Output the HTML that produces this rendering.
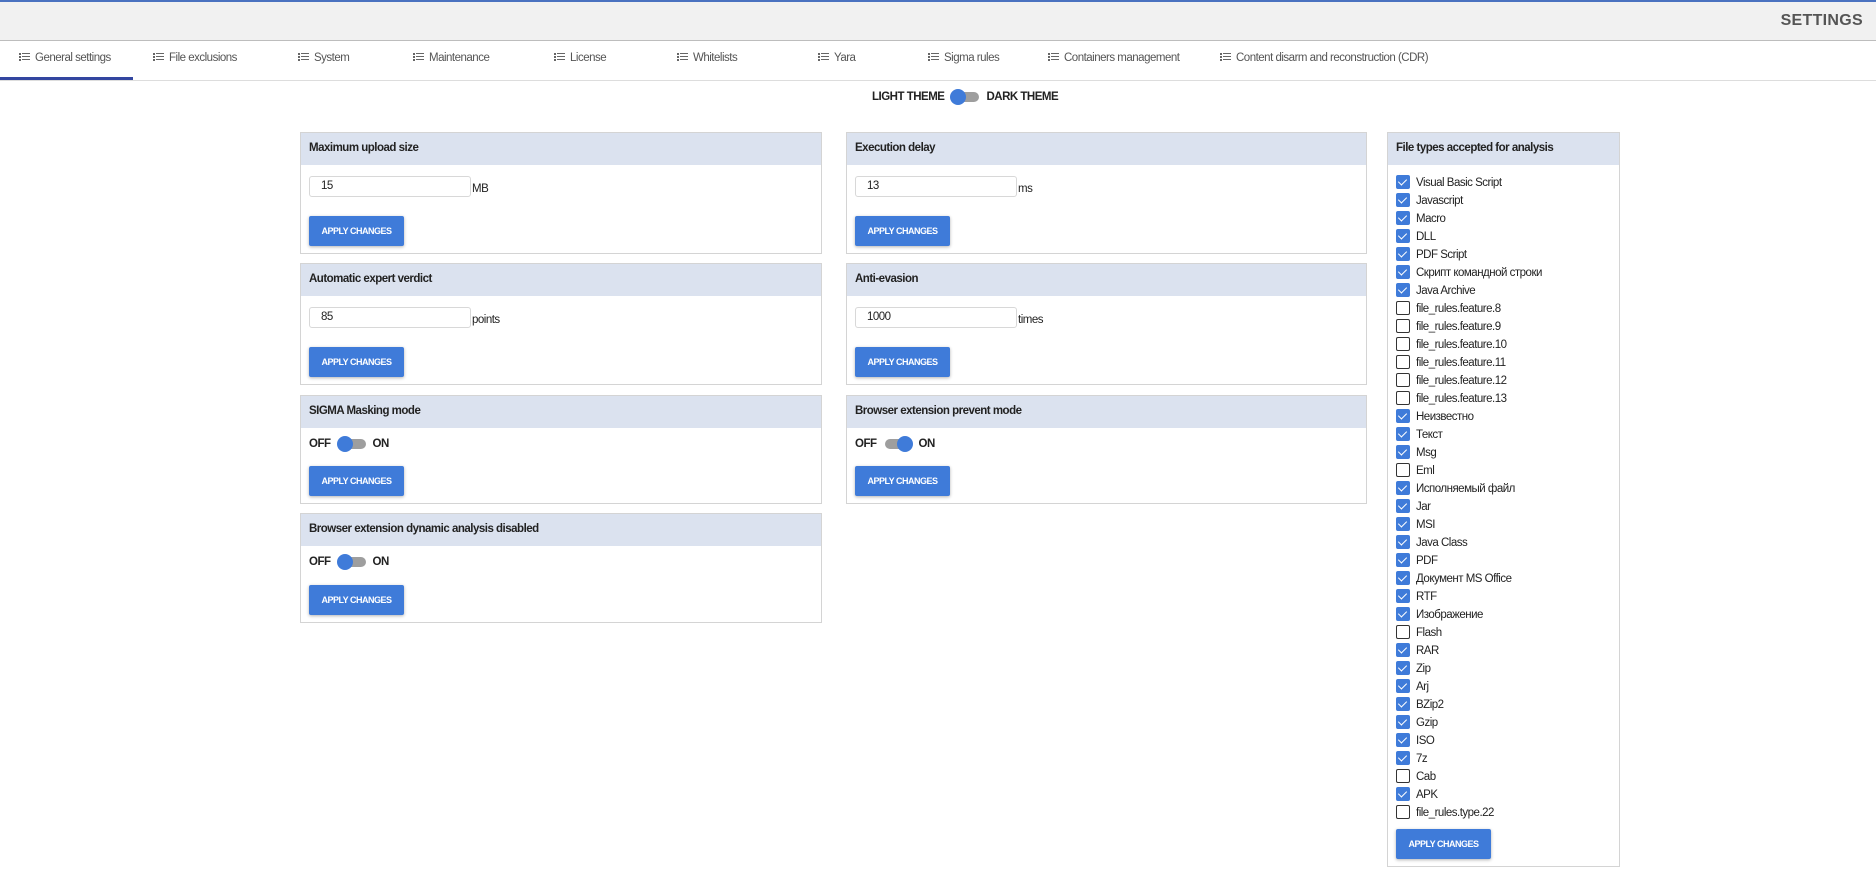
<!DOCTYPE html>
<html><head><meta charset="utf-8"><style>
*{box-sizing:border-box;margin:0;padding:0}
body{width:1876px;height:889px;background:#fff;font-family:"Liberation Sans","Noto Sans CJK SC",sans-serif;color:#222;position:relative;overflow:hidden;font-size:11.5px;letter-spacing:-0.5px}
.hdr{position:absolute;left:0;top:0;width:1876px;height:41px;background:#f1f1f1;border-top:2px solid #4a72c0;border-bottom:1px solid #bdbdbd}
.hdr span{position:absolute;right:13px;top:10px;font-size:16px;font-weight:bold;color:#555;letter-spacing:0.3px}
.tabs{position:absolute;left:0;top:41px;width:1876px;height:40px;border-bottom:1px solid #ddd}
.tab{position:absolute;top:11px;font-size:11.5px;color:#555;white-space:nowrap}
.tab i{display:inline-block;width:11px;height:8px;margin-right:5px;vertical-align:0;background:
linear-gradient(#666,#666) 0 0/2px 2px no-repeat,linear-gradient(#666,#666) 0 3px/2px 2px no-repeat,linear-gradient(#666,#666) 0 6px/2px 2px no-repeat,
linear-gradient(#666,#666) 3px 0/8px 1px no-repeat,linear-gradient(#666,#666) 3px 3px/8px 1px no-repeat,linear-gradient(#666,#666) 3px 6px/8px 1px no-repeat}
.ul{position:absolute;left:0;top:77px;width:133px;height:3px;background:#3346a0}
.card{position:absolute;border:1px solid #d4d4d4;background:#fff}
.ch{height:32px;background:#dbe2ef;font-weight:bold;font-size:11.5px;padding:9px 8px;color:#222}
.inp{position:absolute;left:8px;top:11px;width:162px;height:21px;border:1px solid #d8d8d8;border-radius:3px;padding:3px 11px;font-size:11.5px}
.unit{position:absolute;left:171px;top:18px}
.btn{position:absolute;left:8px;width:95px;height:30px;background:#3f7bd9;border-radius:2px;color:#fff;font-weight:bold;font-size:9px;text-align:center;line-height:30px;box-shadow:0 1px 3px rgba(0,0,0,.3);letter-spacing:-0.5px}
.tg{position:absolute;font-weight:bold;font-size:11.5px;white-space:nowrap}
.sw{display:inline-block;position:relative;width:30px;height:16px;vertical-align:middle;margin:0 6px}
.sw:before{content:"";position:absolute;left:2px;top:3px;width:27px;height:10px;border-radius:5px;background:#9e9e9e}
.sw:after{content:"";position:absolute;top:0;width:16px;height:16px;border-radius:50%;background:#3f7bd9}
.sw.l:after{left:0}.sw.r:after{left:14px}
.cb{position:absolute;left:8px;font-size:11.5px;white-space:nowrap}
.cb b{display:inline-block;width:14px;height:14px;border:1.5px solid #333;border-radius:2px;vertical-align:-3px;margin-right:6px;position:relative}
.cb b.c{background:#3f7bd9;border-color:#3f7bd9}
.cb b.c:after{content:"";position:absolute;left:3px;top:1px;width:4px;height:7px;border:solid #fff;border-width:0 1.3px 1.3px 0;transform:rotate(45deg)}
</style></head><body>
<div class="hdr"><span>SETTINGS</span></div>
<div class="tabs">
<div class="tab" style="left:19px"><i></i>General settings</div>
<div class="tab" style="left:153px"><i></i>File exclusions</div>
<div class="tab" style="left:298px"><i></i>System</div>
<div class="tab" style="left:413px"><i></i>Maintenance</div>
<div class="tab" style="left:554px"><i></i>License</div>
<div class="tab" style="left:677px"><i></i>Whitelists</div>
<div class="tab" style="left:818px"><i></i>Yara</div>
<div class="tab" style="left:928px"><i></i>Sigma rules</div>
<div class="tab" style="left:1048px"><i></i>Containers management</div>
<div class="tab" style="left:1220px"><i></i>Content disarm and reconstruction (CDR)</div>
</div>
<div class="ul"></div>
<div class="tg" style="left:872px;top:89px">LIGHT THEME<span class="sw l"></span>DARK THEME</div>

<div class="card" style="left:300px;top:132px;width:522px;height:122px"><div class="ch">Maximum upload size</div>
<div style="position:relative"><div class="inp">15</div><div class="unit">MB</div><div class="btn" style="top:51px">APPLY CHANGES</div></div></div>
<div class="card" style="left:300px;top:263px;width:522px;height:122px"><div class="ch">Automatic expert verdict</div>
<div style="position:relative"><div class="inp">85</div><div class="unit">points</div><div class="btn" style="top:51px">APPLY CHANGES</div></div></div>
<div class="card" style="left:300px;top:395px;width:522px;height:109px"><div class="ch">SIGMA Masking mode</div>
<div style="position:relative"><div class="tg" style="left:8px;top:8px">OFF<span class="sw l"></span>ON</div><div class="btn" style="top:38px">APPLY CHANGES</div></div></div>
<div class="card" style="left:300px;top:513px;width:522px;height:110px"><div class="ch">Browser extension dynamic analysis disabled</div>
<div style="position:relative"><div class="tg" style="left:8px;top:8px">OFF<span class="sw l"></span>ON</div><div class="btn" style="top:39px">APPLY CHANGES</div></div></div>

<div class="card" style="left:846px;top:132px;width:521px;height:122px"><div class="ch">Execution delay</div>
<div style="position:relative"><div class="inp">13</div><div class="unit">ms</div><div class="btn" style="top:51px">APPLY CHANGES</div></div></div>
<div class="card" style="left:846px;top:263px;width:521px;height:122px"><div class="ch">Anti-evasion</div>
<div style="position:relative"><div class="inp">1000</div><div class="unit">times</div><div class="btn" style="top:51px">APPLY CHANGES</div></div></div>
<div class="card" style="left:846px;top:395px;width:521px;height:109px"><div class="ch">Browser extension prevent mode</div>
<div style="position:relative"><div class="tg" style="left:8px;top:8px">OFF<span class="sw r"></span>ON</div><div class="btn" style="top:38px">APPLY CHANGES</div></div></div>

<div class="card" style="left:1387px;top:132px;width:233px;height:735px"><div class="ch">File types accepted for analysis</div>
<div style="position:relative">
<div class="cb" style="top:10px"><b class="c"></b>Visual Basic Script</div>
<div class="cb" style="top:28px"><b class="c"></b>Javascript</div>
<div class="cb" style="top:46px"><b class="c"></b>Macro</div>
<div class="cb" style="top:64px"><b class="c"></b>DLL</div>
<div class="cb" style="top:82px"><b class="c"></b>PDF Script</div>
<div class="cb" style="top:100px"><b class="c"></b>Скрипт командной строки</div>
<div class="cb" style="top:118px"><b class="c"></b>Java Archive</div>
<div class="cb" style="top:136px"><b></b>file_rules.feature.8</div>
<div class="cb" style="top:154px"><b></b>file_rules.feature.9</div>
<div class="cb" style="top:172px"><b></b>file_rules.feature.10</div>
<div class="cb" style="top:190px"><b></b>file_rules.feature.11</div>
<div class="cb" style="top:208px"><b></b>file_rules.feature.12</div>
<div class="cb" style="top:226px"><b></b>file_rules.feature.13</div>
<div class="cb" style="top:244px"><b class="c"></b>Неизвестно</div>
<div class="cb" style="top:262px"><b class="c"></b>Текст</div>
<div class="cb" style="top:280px"><b class="c"></b>Msg</div>
<div class="cb" style="top:298px"><b></b>Eml</div>
<div class="cb" style="top:316px"><b class="c"></b>Исполняемый файл</div>
<div class="cb" style="top:334px"><b class="c"></b>Jar</div>
<div class="cb" style="top:352px"><b class="c"></b>MSI</div>
<div class="cb" style="top:370px"><b class="c"></b>Java Class</div>
<div class="cb" style="top:388px"><b class="c"></b>PDF</div>
<div class="cb" style="top:406px"><b class="c"></b>Документ MS Office</div>
<div class="cb" style="top:424px"><b class="c"></b>RTF</div>
<div class="cb" style="top:442px"><b class="c"></b>Изображение</div>
<div class="cb" style="top:460px"><b></b>Flash</div>
<div class="cb" style="top:478px"><b class="c"></b>RAR</div>
<div class="cb" style="top:496px"><b class="c"></b>Zip</div>
<div class="cb" style="top:514px"><b class="c"></b>Arj</div>
<div class="cb" style="top:532px"><b class="c"></b>BZip2</div>
<div class="cb" style="top:550px"><b class="c"></b>Gzip</div>
<div class="cb" style="top:568px"><b class="c"></b>ISO</div>
<div class="cb" style="top:586px"><b class="c"></b>7z</div>
<div class="cb" style="top:604px"><b></b>Cab</div>
<div class="cb" style="top:622px"><b class="c"></b>APK</div>
<div class="cb" style="top:640px"><b></b>file_rules.type.22</div>
<div class="btn" style="top:664px">APPLY CHANGES</div>
</div></div>
</body></html>
